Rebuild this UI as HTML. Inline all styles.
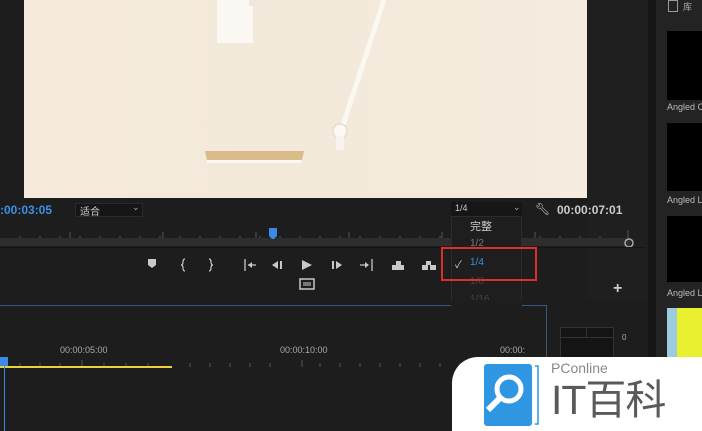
<!DOCTYPE html>
<html><head><meta charset="utf-8"><style>
*{margin:0;padding:0;box-sizing:border-box}
body{width:702px;height:431px;background:#1d1d1d;position:relative;overflow:hidden;font-family:"Liberation Sans","Noto Sans CJK SC",sans-serif;color:#bbb}
.a{position:absolute}
.t{font-size:10px;color:#aaa}
</style></head><body>
<div class="a" style="left:24px;top:0;width:563px;height:198px;background:linear-gradient(90deg,#f6eadd,#f2e9da 50%,#f5ebde)"></div>
<svg class="a" style="left:24px;top:0" width="563" height="198">
<rect x="193" y="0" width="36" height="43" fill="#fbf8f3"/>
<rect x="225" y="0" width="10" height="6" fill="#eee8df"/>
<line x1="360" y1="0" x2="318" y2="128" stroke="#fbf7f1" stroke-width="5"/>
<circle cx="316" cy="131" r="7" fill="#fcf9f4" stroke="#ddd3c6"/>
<rect x="312" y="136" width="8" height="14" fill="#f8f3ec"/>
<path d="M181 151 L280 151 L278 160 L183 160 Z" fill="#d9bb8a"/>
<rect x="183" y="160" width="94" height="3" fill="#fbf8f3"/>
</svg>
<div class="a" style="left:587px;top:0;width:61px;height:300px;background:#1f1f1f"></div>
<div class="a" style="left:648px;top:0;width:8px;height:431px;background:#161616"></div>
<div class="a" style="left:656px;top:0;width:46px;height:431px;background:#232323"></div>
<div class="a" style="left:668px;top:0;width:10px;height:12px;border:1px solid #999"></div>
<div class="a t" style="left:683px;top:0;font-size:9px">库</div>
<div class="a" style="left:667px;top:31px;width:35px;height:69px;background:#000"></div>
<div class="a t" style="left:667px;top:102px;font-size:9px;color:#bbb;white-space:nowrap">Angled C</div>
<div class="a" style="left:667px;top:123px;width:35px;height:68px;background:#000"></div>
<div class="a t" style="left:667px;top:195px;font-size:9px;color:#bbb;white-space:nowrap">Angled L</div>
<div class="a" style="left:667px;top:216px;width:35px;height:66px;background:#000"></div>
<div class="a t" style="left:667px;top:288px;font-size:9px;color:#bbb;white-space:nowrap">Angled L</div>
<div class="a" style="left:667px;top:308px;width:35px;height:50px;background:#e8f030"></div>
<div class="a" style="left:667px;top:308px;width:10px;height:50px;background:#9ccbe0"></div>
<div class="a" style="left:0;top:203px;font-size:12px;font-weight:bold;color:#3d8fe8">:00:03:05</div>
<div class="a" style="left:75px;top:203px;width:68px;height:14px;background:#161616;border:1px solid #2a2a2a"></div>
<div class="a t" style="left:80px;top:203px;font-size:10px;color:#ccc">适合</div>
<div class="a t" style="left:132px;top:202px;font-size:9px">⌄</div>
<div class="a" style="left:451px;top:202px;width:71px;height:14px;background:#161616"></div>
<div class="a t" style="left:455px;top:203px;font-size:9px;color:#ccc">1/4</div>
<div class="a t" style="left:513px;top:202px;font-size:9px">⌄</div>
<div class="a" style="left:535px;top:202px;font-size:12px;color:#ccc">🔧︎</div>
<div class="a" style="left:557px;top:203px;font-size:12px;font-weight:bold;color:#ccc">00:00:07:01</div>
<svg class="a" style="left:0;top:226px" width="640" height="22">
<g stroke="#555" stroke-width="1">
<path d="M20 10v4M40 10v4M60 10v4M80 10v4M100 10v4M120 10v4M140 10v4M160 10v4M180 10v4M200 10v4M220 10v4M240 10v4M260 10v4M280 10v4M300 10v4M320 10v4M340 10v4M360 10v4M380 10v4M400 10v4M420 10v4M440 10v4M540 10v4M560 10v4M580 10v4M600 10v4"/>
<path d="M70 6v8M163 6v8M256 6v8M349 6v8M442 6v8M535 6v8M628 4v10"/>
</g>
<rect x="0" y="12" width="630" height="8" fill="#2e2e2e"/>
<path d="M269 2h8v8l-3 3h-2l-3-3z" fill="#3b8ae8"/>
<circle cx="629" cy="17" r="4" fill="none" stroke="#aaa" stroke-width="1.5"/>
</svg>
<div class="a" style="left:0;top:247px;width:646px;height:1px;background:#151515"></div>
<svg class="a" style="left:140px;top:256px" width="300" height="40" fill="#c8c8c8" stroke="#c8c8c8">
<path d="M8 3h8v6l-4 3l-4-3z" stroke="none"/>
<path d="M45 3q-2 0-2 3t-2 3q2 0 2 3t2 3" fill="none" stroke-width="1.2"/>
<path d="M69 3q2 0 2 3t2 3q-2 0-2 3t-2 3" fill="none" stroke-width="1.2"/>
<path d="M105 3v12M108 9h8" stroke-width="1.3" fill="none"/><path d="M108 9l4-3v6z" stroke="none"/>
<path d="M132 9l6-4v8z M140 5h2v8h-2z" stroke="none"/>
<path d="M162 4l10 5l-10 5z" stroke="none"/>
<path d="M192 5h2v8h-2z M196 5l6 4l-6 4z" stroke="none"/>
<path d="M220 9h8M232 3v12" stroke-width="1.3" fill="none"/><path d="M229 9l-4-3v6z" stroke="none"/>
<rect x="160" y="23" width="14" height="10" fill="none" stroke-width="1.5"/><rect x="163" y="26" width="8" height="4" stroke="none" fill="#777"/>
<path d="M256 5h5v4h-5z M252 9h6v5h-6z M258 9h6v5h-6z" stroke="none"/>
<path d="M286 5h5v4h-5z M282 9h6v5h-6z M290 9h6v5h-6z" stroke="none"/>
</svg>
<div class="a" style="left:613px;top:280px;font-size:16px;font-weight:bold;color:#ccc">+</div>
<div class="a" style="left:451px;top:216px;width:71px;height:94px;background:#1e1e1e;border:1px solid #2c2c2c"></div>
<div class="a" style="left:470px;top:218px;font-size:11px;color:#ccc">完整</div>
<div class="a" style="left:470px;top:238px;font-size:10px;color:#777">1/2</div>
<div class="a" style="left:455px;top:256px;font-size:10px;color:#ccc">✓</div>
<div class="a" style="left:470px;top:257px;font-size:10px;color:#3d8fe8">1/4</div>
<div class="a" style="left:470px;top:276px;font-size:10px;color:#444">1/8</div>
<div class="a" style="left:470px;top:294px;font-size:10px;color:#444">1/16</div>
<div class="a" style="left:441px;top:247px;width:96px;height:34px;border:2px solid #d8302a"></div>
<div class="a" style="left:0;top:305px;width:547px;height:126px;border-top:1px solid #2f5b80;border-right:1px solid #2f5b80;background:#1d1d1d"></div>
<div class="a" style="left:451px;top:300px;width:71px;height:10px;background:#1e1e1e"></div>
<div class="a t" style="left:60px;top:345px;font-size:9px">00:00:05:00</div>
<div class="a t" style="left:280px;top:345px;font-size:9px">00:00:10:00</div>
<div class="a t" style="left:500px;top:345px;font-size:9px">00:00:</div>
<svg class="a" style="left:0;top:355px" width="545" height="20">
<g stroke="#555"><path d="M20 8v4M40 8v4M60 8v4M82 5v7M104 8v4M126 8v4M148 8v4M190 8v4M210 8v4M230 8v4M250 8v4M270 8v4M302 5v7M320 8v4M340 8v4M360 8v4M380 8v4M400 8v4M420 8v4M440 8v4M460 8v4M480 8v4M500 8v4"/></g>
<rect x="0" y="11" width="172" height="2" fill="#e8d43a"/>
<rect x="0" y="2" width="8" height="9" fill="#3b8ae8"/>
</svg>
<div class="a" style="left:4px;top:365px;width:1px;height:66px;background:#3b8ae8"></div>
<div class="a" style="left:560px;top:327px;width:54px;height:104px;background:#141414;border:1px solid #333"></div>
<div class="a" style="left:560px;top:337px;width:54px;height:1px;background:#333"></div>
<div class="a" style="left:586px;top:327px;width:1px;height:10px;background:#333"></div>
<div class="a t" style="left:622px;top:333px;font-size:8px">0</div>
<div class="a" style="left:452px;top:357px;width:250px;height:74px;background:#fff;border-top-left-radius:26px"></div>
<svg class="a" style="left:484px;top:364px" width="56" height="62">
<rect x="0" y="0" width="48" height="62" rx="3" fill="#2f97e1"/>
<path d="M51 2h3v58h-3" fill="none" stroke="#2f97e1" stroke-width="1.5"/>
<circle cx="25" cy="25" r="12" fill="none" stroke="#fff" stroke-width="5"/>
<path d="M16 34L4 46" stroke="#fff" stroke-width="6"/>
</svg>
<div class="a" style="left:551px;top:360px;font-size:14px;color:#888">PConline</div>
<div class="a" style="left:551px;top:374px;font-size:41px;line-height:52px;color:#5a5a5a;letter-spacing:-1px">IT百科</div>
</body></html>
